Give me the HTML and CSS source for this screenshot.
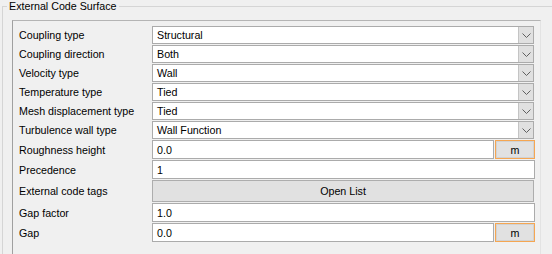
FILE: index.html
```html
<!DOCTYPE html>
<html lang="en">
<head>
  <meta charset="UTF-8" />
  <title>External Code Surface</title>
  <link rel="stylesheet" href="styles.css">
</head>
<body>
  <fieldset class="group">
    <legend>External Code Surface</legend>

    <div class="panel">
      <div class="row">
        <label>Coupling type</label>
        <div class="combo"><span class="value">Structural</span><span class="arrow"><svg width="9" height="5" viewBox="0 0 9 5"><polyline points="0.5,0.5 4.5,4.5 8.5,0.5" /></svg></span></div>
      </div>
      <div class="row">
        <label>Coupling direction</label>
        <div class="combo"><span class="value">Both</span><span class="arrow"><svg width="9" height="5" viewBox="0 0 9 5"><polyline points="0.5,0.5 4.5,4.5 8.5,0.5" /></svg></span></div>
      </div>
      <div class="row">
        <label>Velocity type</label>
        <div class="combo"><span class="value">Wall</span><span class="arrow"><svg width="9" height="5" viewBox="0 0 9 5"><polyline points="0.5,0.5 4.5,4.5 8.5,0.5" /></svg></span></div>
      </div>
      <div class="row">
        <label>Temperature type</label>
        <div class="combo"><span class="value">Tied</span><span class="arrow"><svg width="9" height="5" viewBox="0 0 9 5"><polyline points="0.5,0.5 4.5,4.5 8.5,0.5" /></svg></span></div>
      </div>
      <div class="row">
        <label>Mesh displacement type</label>
        <div class="combo"><span class="value">Tied</span><span class="arrow"><svg width="9" height="5" viewBox="0 0 9 5"><polyline points="0.5,0.5 4.5,4.5 8.5,0.5" /></svg></span></div>
      </div>
      <div class="row">
        <label>Turbulence wall type</label>
        <div class="combo"><span class="value">Wall Function</span><span class="arrow"><svg width="9" height="5" viewBox="0 0 9 5"><polyline points="0.5,0.5 4.5,4.5 8.5,0.5" /></svg></span></div>
      </div>

      <div class="row text first-text">
        <label>Roughness height</label>
        <div class="field">0.0</div>
        <div class="unit">m</div>
      </div>
      <div class="row text">
        <label>Precedence</label>
        <div class="field">1</div>
      </div>
      <div class="row tall">
        <label>External code tags</label>
        <div class="button">Open List</div>
      </div>
      <div class="row text">
        <label>Gap factor</label>
        <div class="field">1.0</div>
      </div>
      <div class="row text">
        <label>Gap</label>
        <div class="field">0.0</div>
        <div class="unit">m</div>
      </div>
    </div>
  </fieldset>
</body>
</html>
```

FILE: styles.css
```css
body {
  margin: 0;
  background-color: #f0f0f0;
  font-family: 'Liberation Sans', Arial, sans-serif;
  font-size: 10.7px;
  color: #000;
  overflow: hidden;
}
.group {
  margin: 0 0 0 2px;
  padding: 0 0 20px 9px;
  border: 1px solid #d5d5d5;
  border-right: none;
  height: 300px;
}
.group legend {
  margin-left: -5px;
  padding: 0 2px;
  line-height: 13px;
}
.panel {
  margin-top: 7px;
  width: 516px;
  padding: 5px 5px 0 6px;
  border: 1px solid #a0a0a0;
  border-top-color: #b4b4b4;
  border-right-color: #e3e3e3;
  height: 300px;
}
.row {
  display: flex;
  align-items: stretch;
  height: 18px;
  margin-bottom: 1px;
}
.row label {
  width: 133px;
  flex: none;
  display: flex;
  align-items: center;
}
.row.text {
  height: 19px;
}
.row.first-text {
  margin-top: 1px;
}
.row.tall {
  height: 22px;
}
.combo {
  flex: 1;
  display: flex;
  border: 1px solid #ababab;
  background: #fff;
  margin-right: 1px;
}
.combo .value, .field {
  flex: 1;
  display: flex;
  align-items: center;
  padding-left: 4px;
}
.combo .arrow {
  width: 14px;
  background: #e0e0e0;
  border-left: 1px solid #c4c4c4;
  display: flex;
  align-items: center;
  justify-content: center;
}
.combo .arrow svg {
  fill: none;
  stroke: #606060;
  stroke-width: 1;
}
.field {
  background: #fff;
  border: 1px solid #ababab;
}
.unit {
  width: 38px;
  margin-left: 1px;
  background: #e1e1e1;
  border: 1px solid #f5a652;
  box-shadow: inset 0 0 0 1px #d2d2d2;
  display: flex;
  align-items: center;
  justify-content: center;
}
.button {
  flex: 1;
  margin-right: 1px;
  background: #e1e1e1;
  border: 1px solid #adadad;
  display: flex;
  align-items: center;
  justify-content: center;
}
```
